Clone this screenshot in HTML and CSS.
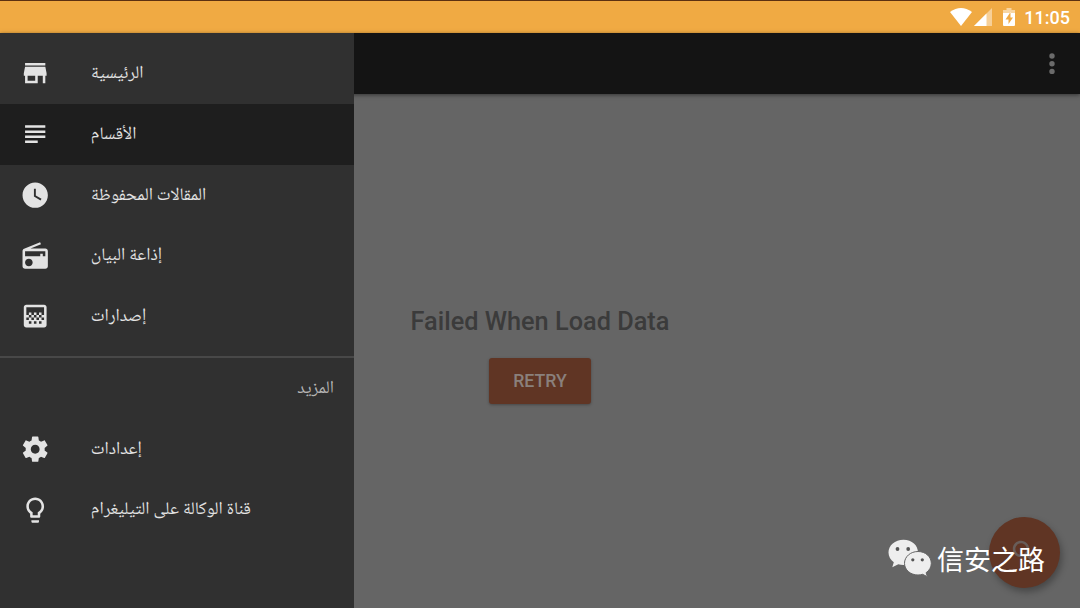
FILE: index.html
```html
<!DOCTYPE html>
<html lang="ar">
<head>
<meta charset="utf-8">
<title>الأقسام</title>
<link rel="stylesheet" href="styles.css">
</head>
<body>
<div class="screen">
  <header class="status">
    <svg class="wifi" viewBox="0 0 22 18"><path d="M0 4Q11-4 22 4L11 18z"/></svg>
    <svg class="signal" viewBox="0 0 18 18"><path d="M0 18L18 0V18z" opacity=".45"/><path d="M0 18L12.500 5.500V18z"/></svg>
    <svg class="battery" viewBox="0 0 12 18"><path d="M3.500 0h5v2H12v3H0V2h3.500z" opacity=".5"/><path fill-rule="evenodd" d="M0 5h12v12q0 1-1 1H1q-1 0-1-1zM7.500 4L2.500 11.500h3V16L10 9.500H7.500z"/></svg>
    <span class="time">11:05</span>
  </header>
  <div class="body">
    <main class="content">
      <div class="toolbar"><svg class="more" viewBox="0 0 6 22"><circle cx="3" cy="3" r="2.7"/><circle cx="3" cy="10.7" r="2.7"/><circle cx="3" cy="18.4" r="2.7"/></svg></div>
      <div class="message">
        <h1 class="title">Failed When Load Data</h1>
        <button class="retry">RETRY</button>
      </div>
      <div class="fab"><svg viewBox="0 0 24 24"><path d="M15.5 14h-.79l-.28-.27C15.41 12.59 16 11.11 16 9.5 16 5.91 13.09 3 9.5 3S3 5.91 3 9.5 5.91 16 9.5 16c1.61 0 3.09-.59 4.23-1.57l.27.28v.79l5 4.99L20.49 19l-4.99-5zm-6 0C7.01 14 5 11.99 5 9.5S7.01 5 9.5 5 14 7.01 14 9.5 11.99 14 9.5 14z"/></svg></div>
    </main>
    <nav class="drawer">
      <a class="item"><svg viewBox="0 0 24 24"><path d="M20 4H4v2h16V4zm1 10v-2l-1-5H4l-1 5v2h1v6h10v-6h4v6h2v-6h1zm-9 4H6v-4h6v4z"/></svg><span class="label">الرئيسية</span></a>
      <a class="item selected"><svg viewBox="0 0 24 24"><path d="M14 17H4v2h10v-2zm6-8H4v2h16V9zM4 15h16v-2H4v2zM4 5v2h16V5H4z"/></svg><span class="label">الأقسام</span></a>
      <a class="item"><svg viewBox="0 0 24 24"><path d="M12 2C6.5 2 2 6.5 2 12s4.500 10 10 10 10-4.500 10-10S17.500 2 12 2zm4.200 14.200L11 13V7h1.500v5.200l4.500 2.700-.8 1.300z"/></svg><span class="label">المقالات المحفوظة</span></a>
      <a class="item"><svg viewBox="0 0 24 24"><path d="M3.240 6.150C2.510 6.430 2 7.170 2 8v12c0 1.100.89 2 2 2h16c1.110 0 2-.9 2-2V8c0-1.110-.89-2-2-2H8.300l8.260-3.340L15.880 1 3.240 6.150zM7 20c-1.660 0-3-1.340-3-3s1.340-3 3-3 3 1.340 3 3-1.340 3-3 3zm13-8h-2v-2h-2v2H4V8h16v4z"/></svg><span class="label">إذاعة البيان</span></a>
      <a class="item"><svg viewBox="0 0 24 24"><path d="M11 9h2v2h-2zm-2 2h2v2H9zm4 0h2v2h-2zm2-2h2v2h-2zM7 9h2v2H7zm12-6H5c-1.100 0-2 .9-2 2v14c0 1.100.9 2 2 2h14c1.100 0 2-.9 2-2V5c0-1.100-.9-2-2-2zM9 18H7v-2h2v2zm4 0h-2v-2h2v2zm4 0h-2v-2h2v2zm2-7h-2v2h2v2h-2v-2h-2v2h-2v-2h-2v2H9v-2H7v2H5v-2h2v-2H5V5h14v6z"/></svg><span class="label">إصدارات</span></a>
      <div class="subheader"><span>المزيد</span></div>
      <a class="item"><svg viewBox="0 0 24 24"><path d="M19.430 12.980c.04-.32.07-.64.07-.98s-.03-.66-.07-.98l2.110-1.650c.19-.15.24-.42.12-.64l-2-3.460c-.12-.22-.39-.3-.61-.22l-2.490 1c-.52-.4-1.080-.73-1.690-.98l-.38-2.650C14.460 2.180 14.250 2 14 2h-4c-.25 0-.46.18-.49.42l-.38 2.650c-.61.25-1.170.59-1.690.98l-2.490-1c-.23-.09-.49 0-.61.22l-2 3.460c-.13.22-.07.49.12.64l2.110 1.650c-.04.32-.07.65-.07.98s.03.66.07.98l-2.110 1.650c-.19.15-.24.42-.12.64l2 3.460c.12.22.39.3.61.22l2.490-1c.52.4 1.080.73 1.690.98l.38 2.650c.03.24.24.42.49.42h4c.25 0 .46-.18.49-.42l.38-2.650c.61-.25 1.170-.59 1.690-.98l2.490 1c.23.09.49 0 .61-.22l2-3.460c.12-.22.07-.49-.12-.64l-2.110-1.650zM12 15.500c-1.930 0-3.500-1.570-3.500-3.500s1.570-3.500 3.500-3.500 3.500 1.570 3.500 3.500-1.570 3.500-3.500 3.500z"/></svg><span class="label">إعدادات</span></a>
      <a class="item"><svg viewBox="0 0 24 24"><path d="M9 21c0 .55.45 1 1 1h4c.55 0 1-.45 1-1v-1H9v1zm3-19C8.140 2 5 5.140 5 9c0 2.380 1.190 4.470 3 5.740V17c0 .55.45 1 1 1h6c.55 0 1-.45 1-1v-2.260c1.810-1.270 3-3.360 3-5.740 0-3.860-3.140-7-7-7zm2.850 11.100l-.85.6V16h-4v-2.300l-.85-.6C7.800 12.160 7 10.630 7 9c0-2.760 2.240-5 5-5s5 2.240 5 5c0 1.630-.8 3.160-2.150 4.100z"/></svg><span class="label">قناة الوكالة على التيليغرام</span></a>
    </nav>
  </div>
  <div class="watermark">
    <svg viewBox="0 0 44 38"><path class="bubble" d="M15.500.8C7 .8.500 6.500.500 13.500c0 4 2 7.300 5.300 9.700L4.300 28.300l6-3.100c1.700.5 3.300.8 5.200.8C24 26 30 20.500 30 13.500S24 .8 15.500.8z"/><circle cx="9.500" cy="10" r="1.900"/><circle cx="20.200" cy="10" r="1.900"/><path class="bubble edge" d="M30 12.500c-7.500 0-13.500 5.200-13.500 11.800S22.500 36 30 36c1.700 0 3.200-.3 4.600-.7l4.800 2.400-1.300-4c3.100-2.200 5.200-5.400 5.200-9.400 0-6.600-5.800-11.800-13.300-11.800z"/><circle cx="24.800" cy="20.800" r="1.600"/><circle cx="34.300" cy="20.800" r="1.600"/></svg>
    <span class="name">信安之路</span>
  </div>
</div>
</body>
</html>
```
FILE: styles.css
```css
body {
  margin: 0;
}

.screen {
  position: relative;
  width: 1080px;
  height: 608px;
  display: flex;
  flex-direction: column;
  overflow: hidden;
  background: #656565;
  font-family: Roboto, "Liberation Sans", sans-serif;
}

.status {
  box-sizing: border-box;
  height: 33px;
  flex: none;
  display: flex;
  align-items: center;
  justify-content: flex-end;
  padding: 0 10px 0 0;
  border-top: 1px solid #5c3010;
  background: #f0aa43;
  color: #fff;
}

.status svg {
  height: 18px;
  fill: #fff;
}

.wifi {
  width: 22px;
  margin-right: 2px;
}

.signal {
  width: 18px;
  margin-right: 11px;
}

.battery {
  width: 12px;
  margin-right: 9px;
}

.time {
  padding-top: 2px;
  font-size: 18px;
  font-weight: 500;
  line-height: 30px;
}

.body {
  flex: 1;
  display: grid;
  grid-template-columns: 354px 1fr;
}

.content {
  grid-area: 1 / 1 / 2 / 3;
  display: flex;
  flex-direction: column;
}

.toolbar {
  height: 61px;
  box-sizing: border-box;
  display: flex;
  justify-content: flex-end;
  align-items: center;
  padding-right: 25px;
  background: #141414;
  box-shadow: 0 1px 4px rgba(0, 0, 0, 0.5);
}

.more {
  width: 6px;
  height: 22px;
  fill: #6b6b6b;
}

.message {
  display: flex;
  flex-direction: column;
  align-items: center;
  padding-top: 213px;
}

.title {
  margin: 0;
  font-size: 25.3px;
  font-weight: 500;
  line-height: 30px;
  color: #3b3b3b;
}

.retry {
  width: 102px;
  height: 46px;
  margin-top: 20.500px;
  padding: 0;
  border: 0;
  border-radius: 3px;
  background: #603524;
  box-shadow: 0 1px 3px rgba(0, 0, 0, 0.3);
  color: #8a807c;
  font: 500 17.7px Roboto, sans-serif;
}

.fab {
  position: absolute;
  left: 989px;
  top: 517px;
  width: 71px;
  height: 71px;
  display: grid;
  place-items: center;
  border-radius: 50%;
  background: #603524;
  box-shadow: 2px 4px 7px rgba(0, 0, 0, 0.3);
}

.fab svg {
  width: 30.4px;
  height: 30.4px;
  fill: #685d59;
}

.drawer {
  grid-area: 1 / 1 / 2 / 2;
  z-index: 1;
  padding-top: 10.300px;
  background: #303030;
}

.item {
  height: 60.7px;
  display: flex;
  align-items: center;
  gap: 40px;
  padding-left: 20.400px;
  color: #e3e3e3;
}

.selected {
  background: #1e1e1e;
}

.item svg {
  width: 30.4px;
  height: 30.4px;
  flex: none;
  fill: #e3e3e3;
}

.label,
.subheader {
  direction: rtl;
  white-space: nowrap;
  font-family: "Noto Naskh Arabic UI", "Noto Sans Arabic", "DejaVu Sans", sans-serif;
  font-size: 17.7px;
  line-height: 24px;
}

.label {
  padding-bottom: 1px;
}

.subheader {
  height: 62.5px;
  box-sizing: border-box;
  margin-top: 9.500px;
  padding: 18px 20px 0;
  border-top: 2px solid #484848;
  color: #b5b5b5;
}

.watermark {
  position: absolute;
  z-index: 2;
  left: 888px;
  top: 538px;
  display: flex;
  align-items: center;
  gap: 5px;
}

.watermark svg {
  width: 44px;
  height: 38px;
  fill: #555;
}

.watermark .bubble {
  fill: #eee;
}

.watermark .edge {
  stroke: #656565;
  stroke-width: 1;
}

.name {
  padding-top: 2px;
  font-family: "Noto Sans CJK SC", sans-serif;
  font-size: 27px;
  line-height: 38px;
  color: #fff;
}
```
